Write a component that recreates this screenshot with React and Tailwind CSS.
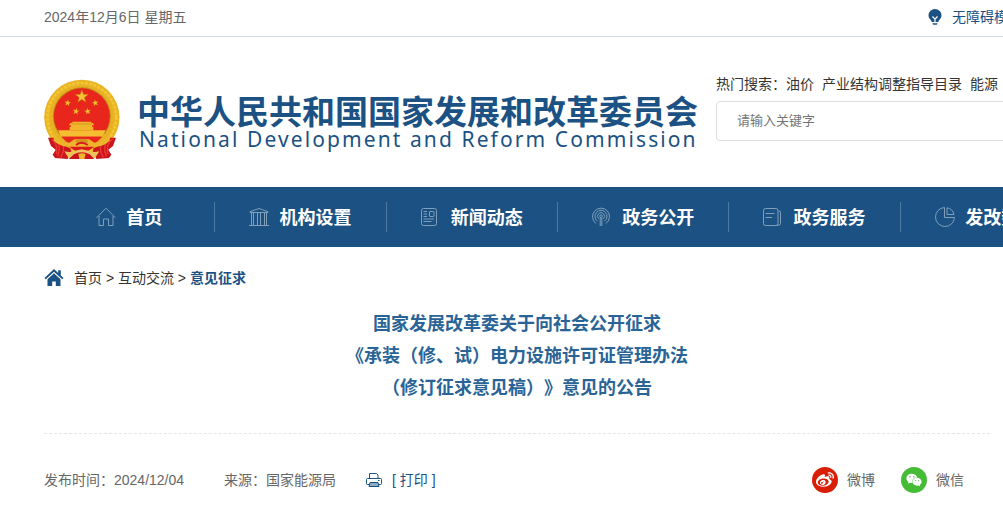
import { FaWeibo, FaWeixin } from "react-icons/fa";

function Emblem() {
  const star = "0,-10 2.4,-3.2 9.5,-3.1 3.8,1.2 5.9,8.1 0,4 -5.9,8.1 -3.8,1.2 -9.5,-3.1 -2.4,-3.2";
  return (
    <svg viewBox="42 28 231 243" className="w-[77px] h-[81px] shrink-0" role="img" aria-label="国徽">
      <circle cx="155.5" cy="143" r="113" fill="#e9b424" />
      <circle cx="155.5" cy="143" r="103" fill="none" stroke="#f3c636" strokeWidth="8" strokeDasharray="9 4" />
      <circle cx="155.5" cy="143" r="91" fill="none" stroke="#e3ac22" strokeWidth="7" strokeDasharray="5 8" />
      <circle cx="155.5" cy="140" r="87" fill="#c58a1c" />
      <circle cx="155.5" cy="140" r="84" fill="#e8261c" />
      <g fill="#f3c331" stroke="#c98a18" strokeWidth=".6">
        <polygon points={star} transform="translate(155.5 81) scale(2)" />
        <polygon points={star} transform="translate(113 100) rotate(10)" />
        <polygon points={star} transform="translate(196 100) rotate(-10)" />
        <polygon points={star} transform="translate(138 125) rotate(8)" />
        <polygon points={star} transform="translate(173 125) rotate(-8)" />
      </g>
      <path d="M127 156h57v4h5l3 7h-6v4h4v11h-71v-11h4v-4h-6l4-7h6z" fill="#f1b62b" />
      <path d="M124 163h62" stroke="#b97513" strokeWidth="1.5" />
      <path d="M84 182h143l-9 19H93z" fill="#f5bd31" />
      <path d="M94 201h123l-26 25h-72z" fill="#e8261c" />
      <path d="M48 204h22q22 12 44 15l3 27-10 22-38-3-7-10 9-15-14-11z" transform="translate(6 0)" fill="#c9151b" />
      <path d="M264 204h-22q-22 12-44 15l-3 27 10 22 38-3 7-10-9-15 14-11z" transform="translate(-6 0)" fill="#c9151b" />
      <path d="M64 208q20 12 15 45M78 210q17 20 5 50M95 217q13 20-3 46M248 208q-20 12-15 45M234 210q-17 20-5 50M217 217q-13 20 3 46" fill="none" stroke="#ef3930" strokeWidth="4" />
      <path d="M70 190q18 24 48 29l15-10h45l15 10q30-5 49-29l-3 23q-15 15-38 18l-21 9h-50l-20-9q-25-4-39-18z" fill="#eeb42c" />
      <path d="M136 214q19-14 39 0l-6 9q-13-9-27 0z" fill="#d29420" />
      <path d="M138 226q17-14 35 0" fill="none" stroke="#d91b1d" strokeWidth="6" />
      <path d="M118 231h75l-20 14h-36z" fill="#d91b1d" />
      <path d="M103 245q20 5 32-2l20-4 21 4q12 7 32 2l-13 20q-18 2-29-14h-21q-12 16-30 13z" fill="#f0c25c" />
      <path d="M132 254q23-12 47 0l14 14h-77z" fill="#c9151b" />
      <path d="M145 253q10-4 22 0l-4 15h-15z" fill="#edb72e" />
    </svg>
  );
}

function HomeIcon() {
  return (
    <svg viewBox="0 0 20 20" className="size-5" fill="none" stroke="currentColor" aria-hidden="true">
      <path d="M.5 10.8 10 1.2l9.500 9.600M3 9v9.500h4.500v-6.500h5v6.500H17V9" />
    </svg>
  );
}

function OrgIcon() {
  return (
    <svg viewBox="0 0 20 20" className="size-5" fill="none" stroke="currentColor" aria-hidden="true">
      <path d="M1 5.500V4.700L10 1.500l9 3.200v.800zM0 18.500h20M2.500 6v12M4.500 6v12M8.500 6v12M11.500 6v12M15.500 6v12M17.500 6v12" />
    </svg>
  );
}

function NewsIcon() {
  return (
    <svg viewBox="0 0 20 20" className="size-5" fill="none" stroke="currentColor" aria-hidden="true">
      <rect x=".5" y="1.500" width="15" height="17" rx="2" />
      <rect x="8.500" y="4.500" width="4.500" height="5" rx=".5" />
      <path d="M2.500 4.500H6M2.500 7H6M2.500 9.500H6M2.500 12H13M2.500 14.500H10.500" />
    </svg>
  );
}

function OpenIcon() {
  return (
    <svg viewBox="0 0 20 20" className="size-5" fill="none" stroke="currentColor" aria-hidden="true">
      <path d="M4 16.500A8.500 8.500 0 1 1 14 16.500M5.500 14.200A6 6 0 1 1 12.500 14.200M6.700 11.800A3.500 3.500 0 1 1 11.300 11.800" />
      <circle cx="9" cy="9.200" r="1.300" />
      <path d="M8.200 10.500V19M9.800 10.500V19" />
    </svg>
  );
}

function ServiceIcon() {
  return (
    <svg viewBox="0 0 20 20" className="size-5" fill="none" stroke="currentColor" aria-hidden="true">
      <rect x=".5" y="1.500" width="14.500" height="17" rx="2" />
      <path d="M2.500 6.500H11.500M2.500 10.500H9M15.500 4Q17.500 3.500 17.500 5.500V16.500Q17.500 18.500 14 18.500" />
    </svg>
  );
}

function DataIcon() {
  return (
    <svg viewBox="0 0 20 20" className="size-5" fill="none" stroke="currentColor" aria-hidden="true">
      <path d="M9.500.5A9.500 9.500 0 1 0 19.500 10.500H9.500z" />
      <path d="M12 .8V7.500H19A8.500 8.500 0 0 0 12 .8z" />
    </svg>
  );
}

const NAV = [
  { label: "首页", Icon: HomeIcon },
  { label: "机构设置", Icon: OrgIcon },
  { label: "新闻动态", Icon: NewsIcon },
  { label: "政务公开", Icon: OpenIcon },
  { label: "政务服务", Icon: ServiceIcon },
  { label: "发改数据", Icon: DataIcon },
];

function TopBar() {
  return (
    <div className="border-b border-[#ccdce9] pl-11">
      <div className="w-[1200px] h-9 flex items-center pb-0.5 text-[#666]">
        <span className="w-[884px]">2024年12月6日 星期五</span>
        <a href="#" className="flex items-center gap-2.5 whitespace-nowrap text-[#1b5283]">
          <svg viewBox="0 0 14 16" className="w-3.5 h-4" aria-hidden="true">
            <path d="M7 0a6.500 6.500 0 0 0-6.500 6.300c0 2.500 1.300 3.800 2.400 5 .4.500.6 1 .8 1.700h6.600c.2-.7.4-1.200.8-1.700 1.100-1.200 2.400-2.500 2.400-5A6.500 6.500 0 0 0 7 0z" fill="currentColor" />
            <path d="M4.500 7.500 7 10.200l2.500-2.700M7 10v3" fill="none" stroke="#fff" strokeWidth="1.200" />
            <path d="M4.500 14.200h5v.8l-1 .8h-3l-1-.8z" fill="currentColor" />
          </svg>
          无障碍模式
        </a>
      </div>
    </div>
  );
}

function Header() {
  return (
    <header className="pl-11 h-[150px]">
      <div className="w-[1200px] flex items-start">
        <a href="#" className="flex items-start gap-4 pt-[42px] text-[#1b5283]">
          <Emblem />
          <span className="flex flex-col w-[579px] whitespace-nowrap pt-4">
            <strong className="text-[33px] leading-9 font-bold">中华人民共和国国家发展和改革委员会</strong>
            <span className="pl-0.5 font-['Noto_Sans'] text-[21px] leading-4 tracking-widest">
              National Development and Reform Commission
            </span>
          </span>
        </a>
        <form className="flex-1 pt-9">
          <div className="mb-1.5 flex h-[22px] items-center gap-2 text-[#333] whitespace-nowrap">
            <span>热门搜索：<a href="#">油价</a></span>
            <a href="#">产业结构调整指导目录</a>
            <a href="#">能源</a>
          </div>
          <input
            type="text"
            aria-label="搜索"
            placeholder="请输入关键字"
            className="block w-full h-10 rounded border border-[#ddd] px-5 pb-0.5 text-[13px] placeholder:text-[#757575]"
          />
        </form>
      </div>
    </header>
  );
}

function Nav() {
  return (
    <nav className="bg-[#1b5283] pl-11">
      <ul className="grid grid-cols-6 w-[1028px] h-[60px] items-center">
        {NAV.map(({ label, Icon }) => (
          <li key={label} className="border-r border-[#4d7a9f] last:border-r-0">
            <a href="#" className="flex h-[30px] items-center justify-center gap-2.5 text-[#7f9fbb]">
              <Icon />
              <span className="pt-0.5 text-lg font-bold text-white">{label}</span>
            </a>
          </li>
        ))}
      </ul>
    </nav>
  );
}

function Breadcrumb() {
  return (
    <div className="flex h-[61px] items-center gap-2.5 text-[#333]">
      <svg viewBox="0 0 20 18" className="w-5 h-[18px] text-[#1b5283]" fill="currentColor" aria-hidden="true">
        <path d="M10 0 .5 9l1.300 1.300L10 2.800l8.200 7.500L19.500 9 16.800 6.400V1.200h-2.600V4z" />
        <path d="M10 4.300 3.500 10.200V17h4.700v-4.500h3.600V17h4.700v-6.800z" />
      </svg>
      <p>
        <a href="#">首页</a> &gt; <a href="#">互动交流</a> &gt;{" "}
        <a href="#" className="font-bold text-[#1b5283]">意见征求</a>
      </p>
    </div>
  );
}

function ArticleMeta() {
  return (
    <div className="flex items-center pr-[26px] pt-[33px] text-[#666] whitespace-nowrap">
      <span className="w-[180px]">发布时间：2024/12/04</span>
      <span className="w-[142px]">来源：国家能源局</span>
      <button type="button" className="flex items-center gap-2.5 text-[#1b5283]">
        <svg viewBox="0 0 16 16" className="size-4" fill="none" stroke="currentColor" aria-hidden="true">
          <path d="M3.500 6.500v-5h7l1.500 1.500v3.500M3 12.500H1.500a1 1 0 0 1-1-1v-4a1 1 0 0 1 1-1h13a1 1 0 0 1 1 1v4a1 1 0 0 1-1 1H13" />
          <path d="M4 10.500h8l1 4H3z" fill="#8fabc5" />
          <path d="M12 8.500h1.500" />
        </svg>
        [ 打印 ]
      </button>
      <div className="ml-auto flex gap-[26px]">
        <a href="#" className="flex items-center gap-[9px]">
          <span className="flex size-[26px] items-center justify-center rounded-full bg-[#d81e06] text-lg text-white">
            <FaWeibo />
          </span>
          微博
        </a>
        <a href="#" className="flex items-center gap-[9px]">
          <span className="flex size-[26px] items-center justify-center rounded-full bg-[#46bb36] text-base text-white">
            <FaWeixin />
          </span>
          微信
        </a>
      </div>
    </div>
  );
}

export default function App() {
  return (
    <div className="overflow-hidden bg-white font-['Liberation_Sans','Noto_Sans_CJK_SC',sans-serif] text-sm">
      <TopBar />
      <Header />
      <Nav />
      <main className="pl-11 pr-[13px] pb-9">
        <Breadcrumb />
        <h1 className="border-b border-dashed border-[#e5e5e5] pb-[29px] text-center text-lg leading-8 font-bold text-[#2a6496] [text-spacing-trim:space-all]">
          国家发展改革委关于向社会公开征求
          <br />
          《承装（修、试）电力设施许可证管理办法
          <br />
          （修订征求意见稿）》意见的公告
        </h1>
        <ArticleMeta />
      </main>
    </div>
  );
}
